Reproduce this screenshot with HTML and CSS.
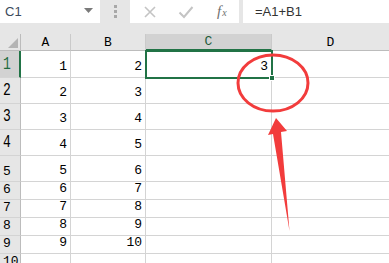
FILE: index.html
```html
<!DOCTYPE html>
<html lang="en">
<head>
    <meta charset="UTF-8">
    <title>Sheet</title>
    <link rel="stylesheet" href="styles.css">
</head>
<body>

    <header class="formula-bar">
        <div class="name-box">
            <span>C1</span>
            <svg class="drop-arrow" width="9" height="5" viewBox="0 0 9 5"><path d="M0 0h9L4.5 5z" fill="#7a7a7a"/></svg>
        </div>
        <div class="grip">
            <svg width="3" height="13" viewBox="0 0 3 13"><rect x="0" y="0" width="3" height="3" fill="#a8a8a8"/><rect x="0" y="5" width="3" height="3" fill="#a8a8a8"/><rect x="0" y="10" width="3" height="3" fill="#a8a8a8"/></svg>
        </div>
        <div class="buttons-box">
            <svg width="14" height="14" viewBox="0 0 14 14"><path d="M2 2l10 10M12 2L2 12" stroke="#c4c4c4" stroke-width="1.6"/></svg>
            <svg width="16" height="14" viewBox="0 0 16 14"><path d="M1.5 7.5l4.5 4.5L14.5 2" stroke="#c4c4c4" stroke-width="2" fill="none"/></svg>
            <span class="fx">f<sub>x</sub></span>
        </div>
        <div class="formula-box">=A1+B1</div>
    </header>

    <main class="sheet">
        <div class="corner"><div class="corner-mark"></div></div>
        <div class="col-head">A</div>
        <div class="col-head">B</div>
        <div class="col-head selected">C</div>
        <div class="col-head last">D</div>

        <!-- rows filled in below -->
        <div class="row-head selected"><span class="tall">1</span></div>
        <div class="cell">1</div><div class="cell">2</div><div class="cell">3</div><div class="cell last"></div>

        <div class="row-head"><span class="tall">2</span></div>
        <div class="cell">2</div><div class="cell">3</div><div class="cell"></div><div class="cell last"></div>

        <div class="row-head"><span class="tall">3</span></div>
        <div class="cell">3</div><div class="cell">4</div><div class="cell"></div><div class="cell last"></div>

        <div class="row-head"><span class="tall">4</span></div>
        <div class="cell">4</div><div class="cell">5</div><div class="cell"></div><div class="cell last"></div>

        <div class="row-head"><span>5</span></div>
        <div class="cell">5</div><div class="cell">6</div><div class="cell"></div><div class="cell last"></div>

        <div class="row-head"><span>6</span></div>
        <div class="cell">6</div><div class="cell">7</div><div class="cell"></div><div class="cell last"></div>

        <div class="row-head"><span>7</span></div>
        <div class="cell">7</div><div class="cell">8</div><div class="cell"></div><div class="cell last"></div>

        <div class="row-head"><span>8</span></div>
        <div class="cell">8</div><div class="cell">9</div><div class="cell"></div><div class="cell last"></div>

        <div class="row-head"><span>9</span></div>
        <div class="cell">9</div><div class="cell">10</div><div class="cell"></div><div class="cell last"></div>

        <div class="row-head"><span>10</span></div>
        <div class="cell"></div><div class="cell"></div><div class="cell"></div><div class="cell last"></div>

        <div class="selection"><div class="fill-handle"></div></div>

        <svg class="markup" width="389" height="263" viewBox="0 0 389 263">
            <ellipse cx="273" cy="83" rx="35" ry="28" fill="none" stroke="#f23c3c" stroke-width="3"/>
            <path d="M276 118L268 135L273 134L289.5 231L281 132L287 131Z" fill="#f23c3c"/>
        </svg>
    </main>

</body>
</html>
```

FILE: styles.css
```css
:root {
    --bar-color: #e6e6e6;
    --head-color: #e6e6e6;
    --head-selected: #d2d2d2;
    --grid-line: #d4d4d4;
    --head-line: #bcbcbc;
    --excel-green: #217346;
}

* {
    box-sizing: border-box;
}

body {
    margin: 0;
    padding: 0;
    width: 389px;
    height: 263px;
    overflow: hidden;
    background-color: #ffffff;
    font-family: 'Liberation Mono', monospace;
}

.formula-bar {
    display: flex;
    height: 34px;
    padding-bottom: 11px;
    background-color: var(--bar-color);
}

.name-box {
    width: 100px;
    background-color: #ffffff;
    display: flex;
    align-items: center;
    justify-content: space-between;
    padding: 0 7px 0 5px;
    font-family: 'Liberation Sans', sans-serif;
    font-size: 13px;
    color: #3c4a5c;
}

.drop-arrow {
    margin-top: -2px;
}

.grip {
    width: 30px;
    display: flex;
    align-items: center;
    justify-content: center;
}

.buttons-box {
    width: 109px;
    background-color: #ffffff;
    display: flex;
    align-items: center;
    gap: 21px;
    padding-left: 13px;
}

.fx {
    font-family: 'Liberation Serif', serif;
    font-style: italic;
    font-size: 15px;
    color: #707070;
    margin-left: 2px;
}

.fx sub {
    font-size: 10px;
    vertical-align: 0;
    margin-left: 1px;
}

.formula-box {
    flex-grow: 1;
    margin-left: 4px;
    background-color: #ffffff;
    display: flex;
    align-items: center;
    padding-left: 12px;
    font-family: 'Liberation Sans', sans-serif;
    font-size: 13px;
    color: #333333;
}

.sheet {
    position: relative;
    display: grid;
    grid-template-columns: 21px 50px 75px 126px 1fr;
    grid-template-rows: 17px 27px 26px 26px 26px 26px 18px 18px 18px 18px 18px;
    font-size: 13px;
    color: #000000;
}

.corner {
    position: relative;
    background-color: var(--head-color);
    border-right: 1px solid var(--head-line);
    border-bottom: 1px solid var(--head-line);
}

.corner-mark {
    position: absolute;
    right: 2px;
    bottom: 2px;
    width: 0;
    height: 0;
    border-left: 10px solid transparent;
    border-bottom: 10px solid #b4b4b4;
}

.col-head {
    background-color: var(--head-color);
    border-right: 1px solid #cacaca;
    border-bottom: 1px solid var(--head-line);
    display: flex;
    align-items: flex-end;
    justify-content: center;
    line-height: 15px;
}

.col-head.selected {
    background-color: var(--head-selected);
    border-bottom: 2px solid var(--excel-green);
    color: #1e5b3a;
}

.col-head.last,
.cell.last {
    border-right: none;
}

.row-head {
    background-color: var(--head-color);
    border-right: 1px solid var(--head-line);
    border-bottom: 1px solid var(--grid-line);
    display: flex;
    align-items: flex-end;
    padding: 0 0 2px 3px;
    line-height: 14px;
}

.row-head.selected {
    background-color: var(--head-selected);
    border-right: 2px solid var(--excel-green);
    color: #1e6b3e;
}

.tall {
    display: inline-block;
    transform: scaleY(1.4);
    transform-origin: bottom;
}

.cell {
    border-right: 1px solid var(--grid-line);
    border-bottom: 1px solid var(--grid-line);
    display: flex;
    align-items: flex-end;
    justify-content: flex-end;
    padding: 0 3px 3px 0;
    line-height: 14px;
}

.selection {
    position: absolute;
    left: 145px;
    top: 16px;
    width: 128px;
    height: 29px;
    border: 2px solid var(--excel-green);
}

.fill-handle {
    position: absolute;
    right: -4px;
    bottom: -4px;
    width: 6px;
    height: 6px;
    background-color: var(--excel-green);
    border: 1px solid #ffffff;
}

.markup {
    position: absolute;
    left: 0;
    top: -34px;
    pointer-events: none;
}
```
